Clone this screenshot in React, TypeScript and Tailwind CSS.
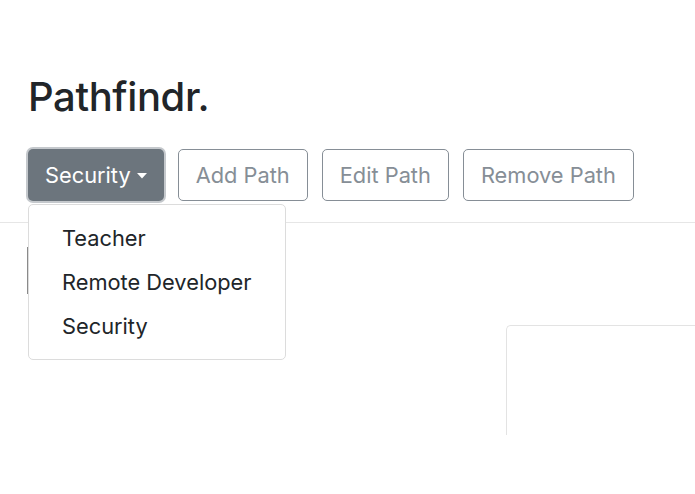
import { useState } from "react";

const paths = ["Teacher", "Remote Developer", "Security"];

function Caret() {
  return (
    <svg width="10" height="6" viewBox="0 0 10 6" className="ml-[6px] mt-[1px]">
      <path d="M0 0h10L5 5.5z" fill="currentColor" />
    </svg>
  );
}

export default function App() {
  const [selected] = useState("Security");

  return (
    <div className="relative min-h-screen overflow-hidden bg-white font-['Inter','Liberation_Sans',sans-serif] text-[#212529]">
      <div className="px-[28px] pt-[73px]">
        <h1 className="text-[40px] font-medium leading-[48px] tracking-[-0.4px]">Pathfindr.</h1>

        <div className="mt-[28px] flex gap-[14px]">
          <div className="relative">
            <button className="flex h-[52px] items-center rounded-[5px] bg-[#6c757d] px-[17px] text-[21.8px] text-white shadow-[0_0_0_2px_#c4c8cc]">
              {selected}
              <Caret />
            </button>

            <div className="absolute left-0 top-[55px] z-10 w-[258px] rounded-[5px] border border-[#dcdcdc] bg-white py-[11px]">
              {paths.map((p) => (
                <div key={p} className="px-[33px] text-[21.8px] leading-[44px] text-[#212529]">
                  {p}
                </div>
              ))}
            </div>
          </div>

          {["Add Path", "Edit Path", "Remove Path"].map((label) => (
            <button
              key={label}
              className="h-[52px] rounded-[5px] border border-[#868e96] px-[17px] text-[21.8px] text-[#868e96]"
            >
              {label}
            </button>
          ))}
        </div>
      </div>

      <div className="mt-[21px] border-t border-[#e6e6e6]" />

      <div className="px-[27px] pt-[24px]">
        <div className="h-[47px] w-[2px] bg-[#8a8a8a]" />
      </div>

      <div className="flex justify-end pt-[31px]">
        <div className="-mr-[60px] h-[110px] w-[249px] rounded-tl-[5px] border-l border-t border-[#e3e3e3]" />
      </div>
    </div>
  );
}
